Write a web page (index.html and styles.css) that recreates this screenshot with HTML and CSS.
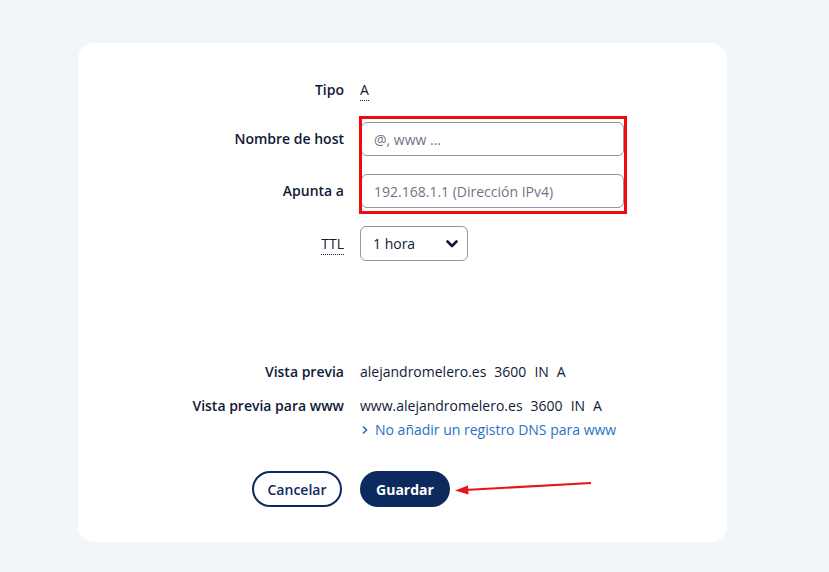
FILE: index.html
```html
<!DOCTYPE html>
<html lang="es">
<head>
<meta charset="utf-8">
<title>Registro DNS</title>
<link rel="stylesheet" href="styles.css">
</head>
<body>
<div class="card">
  <div class="form">
    <div class="label row-tipo">Tipo</div>
    <div class="value row-tipo"><span class="abbr">A</span></div>

    <label class="label row-first" for="host">Nombre de host</label>
    <div class="value row-first"><input id="host" class="input" type="text" placeholder="@, www ..."></div>

    <label class="label row-field" for="dest">Apunta a</label>
    <div class="value row-field"><input id="dest" class="input" type="text" placeholder="192.168.1.1 (Dirección IPv4)"></div>

    <div class="label row-ttl"><span class="abbr">TTL</span></div>
    <div class="value row-ttl">
      <div class="select">
        <span>1 hora</span>
        <svg class="chev" width="12" height="8" viewBox="0 0 12 8"><path d="M1.5 1.5 L6 6 L10.5 1.5" fill="none" stroke="#0f1a36" stroke-width="2.6" stroke-linecap="round" stroke-linejoin="round"/></svg>
      </div>
    </div>

    <div class="label row-prev">Vista previa</div>
    <div class="value row-prev">alejandromelero.es<span class="sp"></span>3600<span class="sp"></span>IN<span class="sp"></span>A</div>

    <div class="label row-www">Vista previa para www</div>
    <div class="value row-www">
      <div>www.alejandromelero.es<span class="sp"></span>3600<span class="sp"></span>IN<span class="sp"></span>A</div>
      <a class="link" href="#"><svg width="8" height="10" viewBox="0 0 8 10"><path d="M2 1.5 L5.5 5 L2 8.5" fill="none" stroke="#1f72c4" stroke-width="1.6"/></svg> No añadir un registro DNS para www</a>
    </div>

    <div class="btn-cell-left row-btn"><button class="btn btn-outline">Cancelar</button></div>
    <div class="value row-btn"><button class="btn btn-primary">Guardar</button></div>
  </div>

  <div class="highlight"></div>
  <svg class="arrow" width="150" height="20" viewBox="0 0 150 20">
    <path d="M138 4 L12 11" stroke="#e8141b" stroke-width="2.2" fill="none"/>
    <path d="M2 11.6 L15 6.5 L15.5 15.5 Z" fill="#e8141b"/>
  </svg>
</div>
</body>
</html>
```
FILE: styles.css
```css
* { box-sizing: border-box; }
html, body { margin: 0; padding: 0; }
body {
  background: #f3f6f9;
  font-family: "Open Sans", "Noto Sans", sans-serif;
  font-size: 14px;
  color: #0f1a36;
  width: 829px;
  height: 572px;
  overflow: hidden;
}
.card {
  position: relative;
  margin: 43px 0 0 78px;
  width: 649px;
  height: 499px;
  background: #ffffff;
  border-radius: 16px;
  padding-top: 37px;
}
.form {
  display: grid;
  grid-template-columns: 266px 1fr;
  column-gap: 16px;
  align-items: center;
}
.label {
  text-align: right;
  font-weight: 600;
  line-height: 20px;
  color: #0f1a36;
}
.value { line-height: 20px; color: #0f1a36; }
.sp { display: inline-block; width: 8px; }
.abbr {
  border-bottom: 1px dotted #0f1a36;
  font-weight: 400;
  padding-bottom: 1px;
}
.row-first { margin-top: 22px; }
.row-field { margin-top: 18px; }
.row-ttl { margin-top: 18px; }
.row-prev { margin-top: 101px; }
.row-www { margin-top: 14px; align-self: start; }
.row-btn { margin-top: 31px; }

.input {
  display: block;
  width: 263px;
  height: 34px;
  margin-left: 1px;
  border: 1px solid #8e96a8;
  border-radius: 6px;
  padding: 0 12px;
  font-family: inherit;
  font-size: 14px;
  color: #0f1a36;
  background: #fff;
}
.input::placeholder { color: #6e7585; }

.select {
  width: 108px;
  height: 35px;
  border: 1px solid #8e96a8;
  border-radius: 6px;
  display: flex;
  align-items: center;
  justify-content: space-between;
  padding: 0 9px 0 12px;
  color: #0f1a36;
}
.chev { display: block; }

.link {
  display: flex;
  align-items: center;
  gap: 6px;
  margin-top: 4px;
  color: #1f72c4;
  text-decoration: none;
  line-height: 20px;
}
.link svg { display: block; margin-left: 1px; }

.btn-cell-left { display: flex; justify-content: flex-end; padding-right: 2px; }
.btn {
  height: 36px;
  border-radius: 18px;
  font-family: inherit;
  font-size: 14px;
  font-weight: 700;
  padding: 0;
  cursor: pointer;
}
.btn-outline {
  width: 90px;
  background: #fff;
  color: #0c2a5e;
  border: 2px solid #0c2a5e;
  font-weight: 600;
}
.btn-primary {
  width: 90px;
  background: #0c2a5e;
  color: #fff;
  border: none;
}

.highlight {
  position: absolute;
  left: 281px;
  top: 73px;
  width: 268px;
  height: 98px;
  border: 3px solid #ee0a0f;
}
.arrow {
  position: absolute;
  left: 375px;
  top: 436px;
}
```
